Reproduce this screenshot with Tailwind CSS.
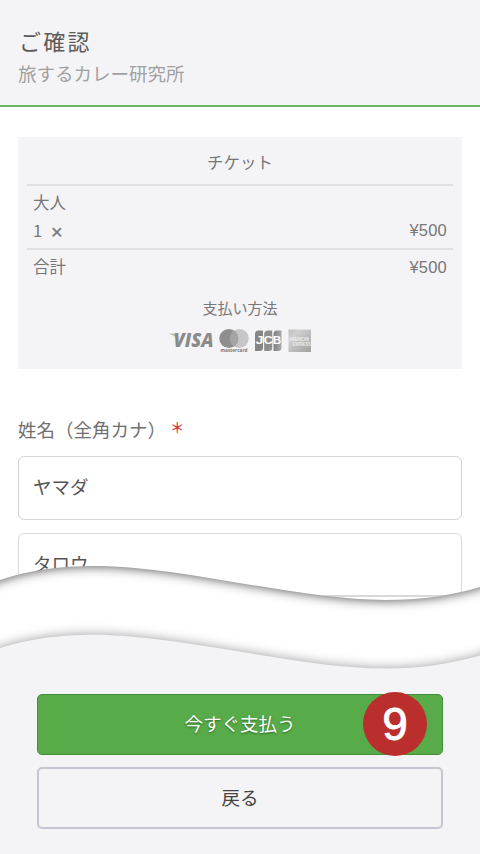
<!DOCTYPE html>
<html lang="ja">
<head>
<meta charset="utf-8">
<meta name="viewport" content="width=device-width, initial-scale=1">
<title>ご確認</title>
<script src="https://cdn.jsdelivr.net/npm/@tailwindcss/browser@4"></script>
</head>
<body class="relative flex h-[854px] w-[480px] flex-col overflow-hidden bg-white font-['Liberation_Sans','Noto_Sans_CJK_JP',sans-serif] text-[#777]">
  <header class="flex h-[107px] shrink-0 flex-col border-b-2 border-[#6cb765] bg-[#f4f4f7] px-[18px] pt-[27px]">
    <h1 class="pl-[1px] text-[22px] leading-[32px] tracking-[2.2px] text-[#5b5b58]">ご確認</h1>
    <p class="text-[18.5px] leading-[32px] text-[#a0a0a0]">旅するカレー研究所</p>
  </header>

  <main class="flex h-[528px] shrink-0 flex-col overflow-hidden px-[18px] pt-[30px]">
    <section class="flex h-[232px] shrink-0 flex-col bg-[#f4f4f7] px-[9px] text-[16.5px]">
      <h2 class="h-[47px] pt-[14px] text-center leading-[24px]">チケット</h2>
      <div class="h-[64px] border-t-2 border-[#e1e1e1] px-[6px] pt-[3px]">
        <div class="leading-[28px]">大人</div>
        <div class="flex h-[28px] justify-between leading-[27px]"><span class="flex"><span class="w-[18px] font-['Noto_Sans_CJK_JP'] leading-[26px]">1</span><span class="pt-[2px] text-[20px] [-webkit-text-stroke:0.3px_#777]">×</span></span><span class="tracking-[0.2px]">¥500</span></div>
      </div>
      <div class="flex h-[46px] justify-between border-t-2 border-[#e1e1e1] px-[6px] pt-[3px] leading-[28px]"><span>合計</span><span class="tracking-[0.2px]">¥500</span></div>
      <div class="pt-[1px] text-center text-[15px] leading-[28px]">支払い方法</div>
      <svg class="ml-[141px] mt-[3px] block overflow-visible" width="146" height="30" viewBox="168 326 146 30">
        <defs>
          <linearGradient id="ax" x1="0" y1="0" x2="1" y2="1"><stop offset="0" stop-color="#bcbcbc"/><stop offset=".25" stop-color="#d0d0d0"/><stop offset="1" stop-color="#a0a0a0"/></linearGradient>
          <linearGradient id="jc" x1="0" x2="1"><stop offset="0" stop-color="#808080"/><stop offset="1" stop-color="#aaa"/></linearGradient>
        </defs>
        <path d="M169.500 333.500h5.500q1.500 0 2 1.500l1.500 5Q175 335.500 169.500 334Z" fill="#bbb"/>
        <text x="173.500" y="346.700" font-family="Open Sans" font-size="18.500" font-weight="800" font-style="italic" fill="#8b8b8b" textLength="40" lengthAdjust="spacingAndGlyphs">VISA</text>
        <circle cx="239.300" cy="338.500" r="9.500" fill="#c6c6c6"/>
        <circle cx="228.800" cy="338.500" r="9.500" fill="#8e8e8e"/>
        <path d="M234 330.600a9.500 9.500 0 0 1 0 15.800a9.500 9.500 0 0 1 0-15.800Z" fill="#a4a4a4"/>
        <text x="220.500" y="352.300" font-family="Open Sans" font-size="5.200" font-weight="700" fill="#777" textLength="27" lengthAdjust="spacingAndGlyphs">mastercard</text>
        <path d="M258.500 330.500h4.500v17q0 3.500-3.500 3.500h-4.500v-17q0-3.500 3.500-3.500Z" fill="#858585"/>
        <path d="M268 330.500h4.200v17q0 3.500-3.500 3.500h-4.500v-17q0-3.500 3.800-3.500Z" fill="#8d8d8d"/>
        <path d="M277 330.500h4.500v17q0 3.500-3.500 3.500h-4.500v-17q0-3.500 3.500-3.500Z" fill="url(#jc)"/>
        <g font-family="Liberation Sans" font-size="10" font-weight="700" fill="#fff"><text x="255.500" y="344.400" textLength="8" lengthAdjust="spacingAndGlyphs">J</text><text x="263.800" y="344.400" textLength="9" lengthAdjust="spacingAndGlyphs">C</text><text x="272.800" y="344.400" textLength="8.500" lengthAdjust="spacingAndGlyphs">B</text></g>
        <path d="M288.500 329.500h22.500v22.500h-22.500z" fill="url(#ax)"/>
        <g font-family="Liberation Sans" font-size="4.500" font-weight="700" fill="#eee"><text x="289" y="340.800" textLength="20" lengthAdjust="spacingAndGlyphs">AMERICAN</text><text x="292.500" y="345.700" textLength="18" lengthAdjust="spacingAndGlyphs">EXPRESS</text></g>
      </svg>
    </section>

    <label class="mt-[45px] flex h-[32px] shrink-0 text-[18.5px] leading-[33px] text-[#707070]">姓名（全角カナ）<span class="ml-[4px] font-['Noto_Sans_CJK_JP'] text-[14.5px] font-medium leading-[26px] text-[#d93434]">＊</span></label>
    <div class="mt-[10px] flex h-[64px] shrink-0 items-center rounded-[6px] border border-[#d4d4d4] bg-white px-[14px] pb-[1px] text-[18.5px] text-[#555]">ヤマダ</div>
    <div class="mt-[13px] flex h-[64px] shrink-0 items-center rounded-[6px] border border-b-2 border-[#d9d9d9] bg-white px-[14px] text-[18.5px] text-[#555]">タロウ</div>
  </main>

  <footer class="flex grow flex-col gap-[12px] bg-[#f4f4f7] px-[37px] pt-[59px] text-[18.5px]">
    <button class="flex h-[61px] shrink-0 items-center justify-center rounded-[5px] border border-[#438f3a] bg-[#57ab49] pt-[1px] text-white [text-shadow:0_1px_2px_#2d6a25]">今すぐ支払う</button>
    <button class="flex h-[62px] shrink-0 items-center justify-center rounded-[5px] border-2 border-[#c6c6d2] bg-[#f4f4f7] pt-[1px] text-[#444]">戻る</button>
  </footer>

  <svg class="absolute left-0 top-[560px] block" width="480" height="115" viewBox="0 560 480 115">
    <defs>
      <clipPath id="band"><path d="M0 580C30 570 60 566 95 566C180 566 300 600 385 600C420 600 450 596 480 587V655.500C450 664 420 668.500 385 668.500C300 668.500 180 634.700 92 634.700C60 634.700 30 638.500 0 648Z"/></clipPath>
      <filter id="soft" color-interpolation-filters="sRGB" filterUnits="userSpaceOnUse" x="-60" y="500" width="600" height="240"><feGaussianBlur stdDeviation="6"/></filter>
    </defs>
    <g clip-path="url(#band)">
      <path d="M0 555H480V680H0Z" fill="#fff"/>
      <path d="M-60 604L0 580C30 570 60 566 95 566C180 566 300 600 385 600C420 600 450 596 480 587L540 565V500H-60Z" fill="#000" fill-opacity=".72" filter="url(#soft)"/>
      <path d="M-60 672L0 648C30 638.500 60 634.700 92 634.700C180 634.700 300 668.500 385 668.500C420 668.500 450 664 480 655.500L540 635V740H-60Z" fill="#000" fill-opacity=".4" filter="url(#soft)"/>
    </g>
  </svg>
  <div class="absolute left-[363px] top-[692px] flex h-16 w-16 items-center justify-center rounded-full bg-[#bb2e2e] pb-[1px] font-['Liberation_Sans'] text-[46px] leading-none text-white [-webkit-text-stroke:0.8px_white]">9</div>
</body>
</html>
